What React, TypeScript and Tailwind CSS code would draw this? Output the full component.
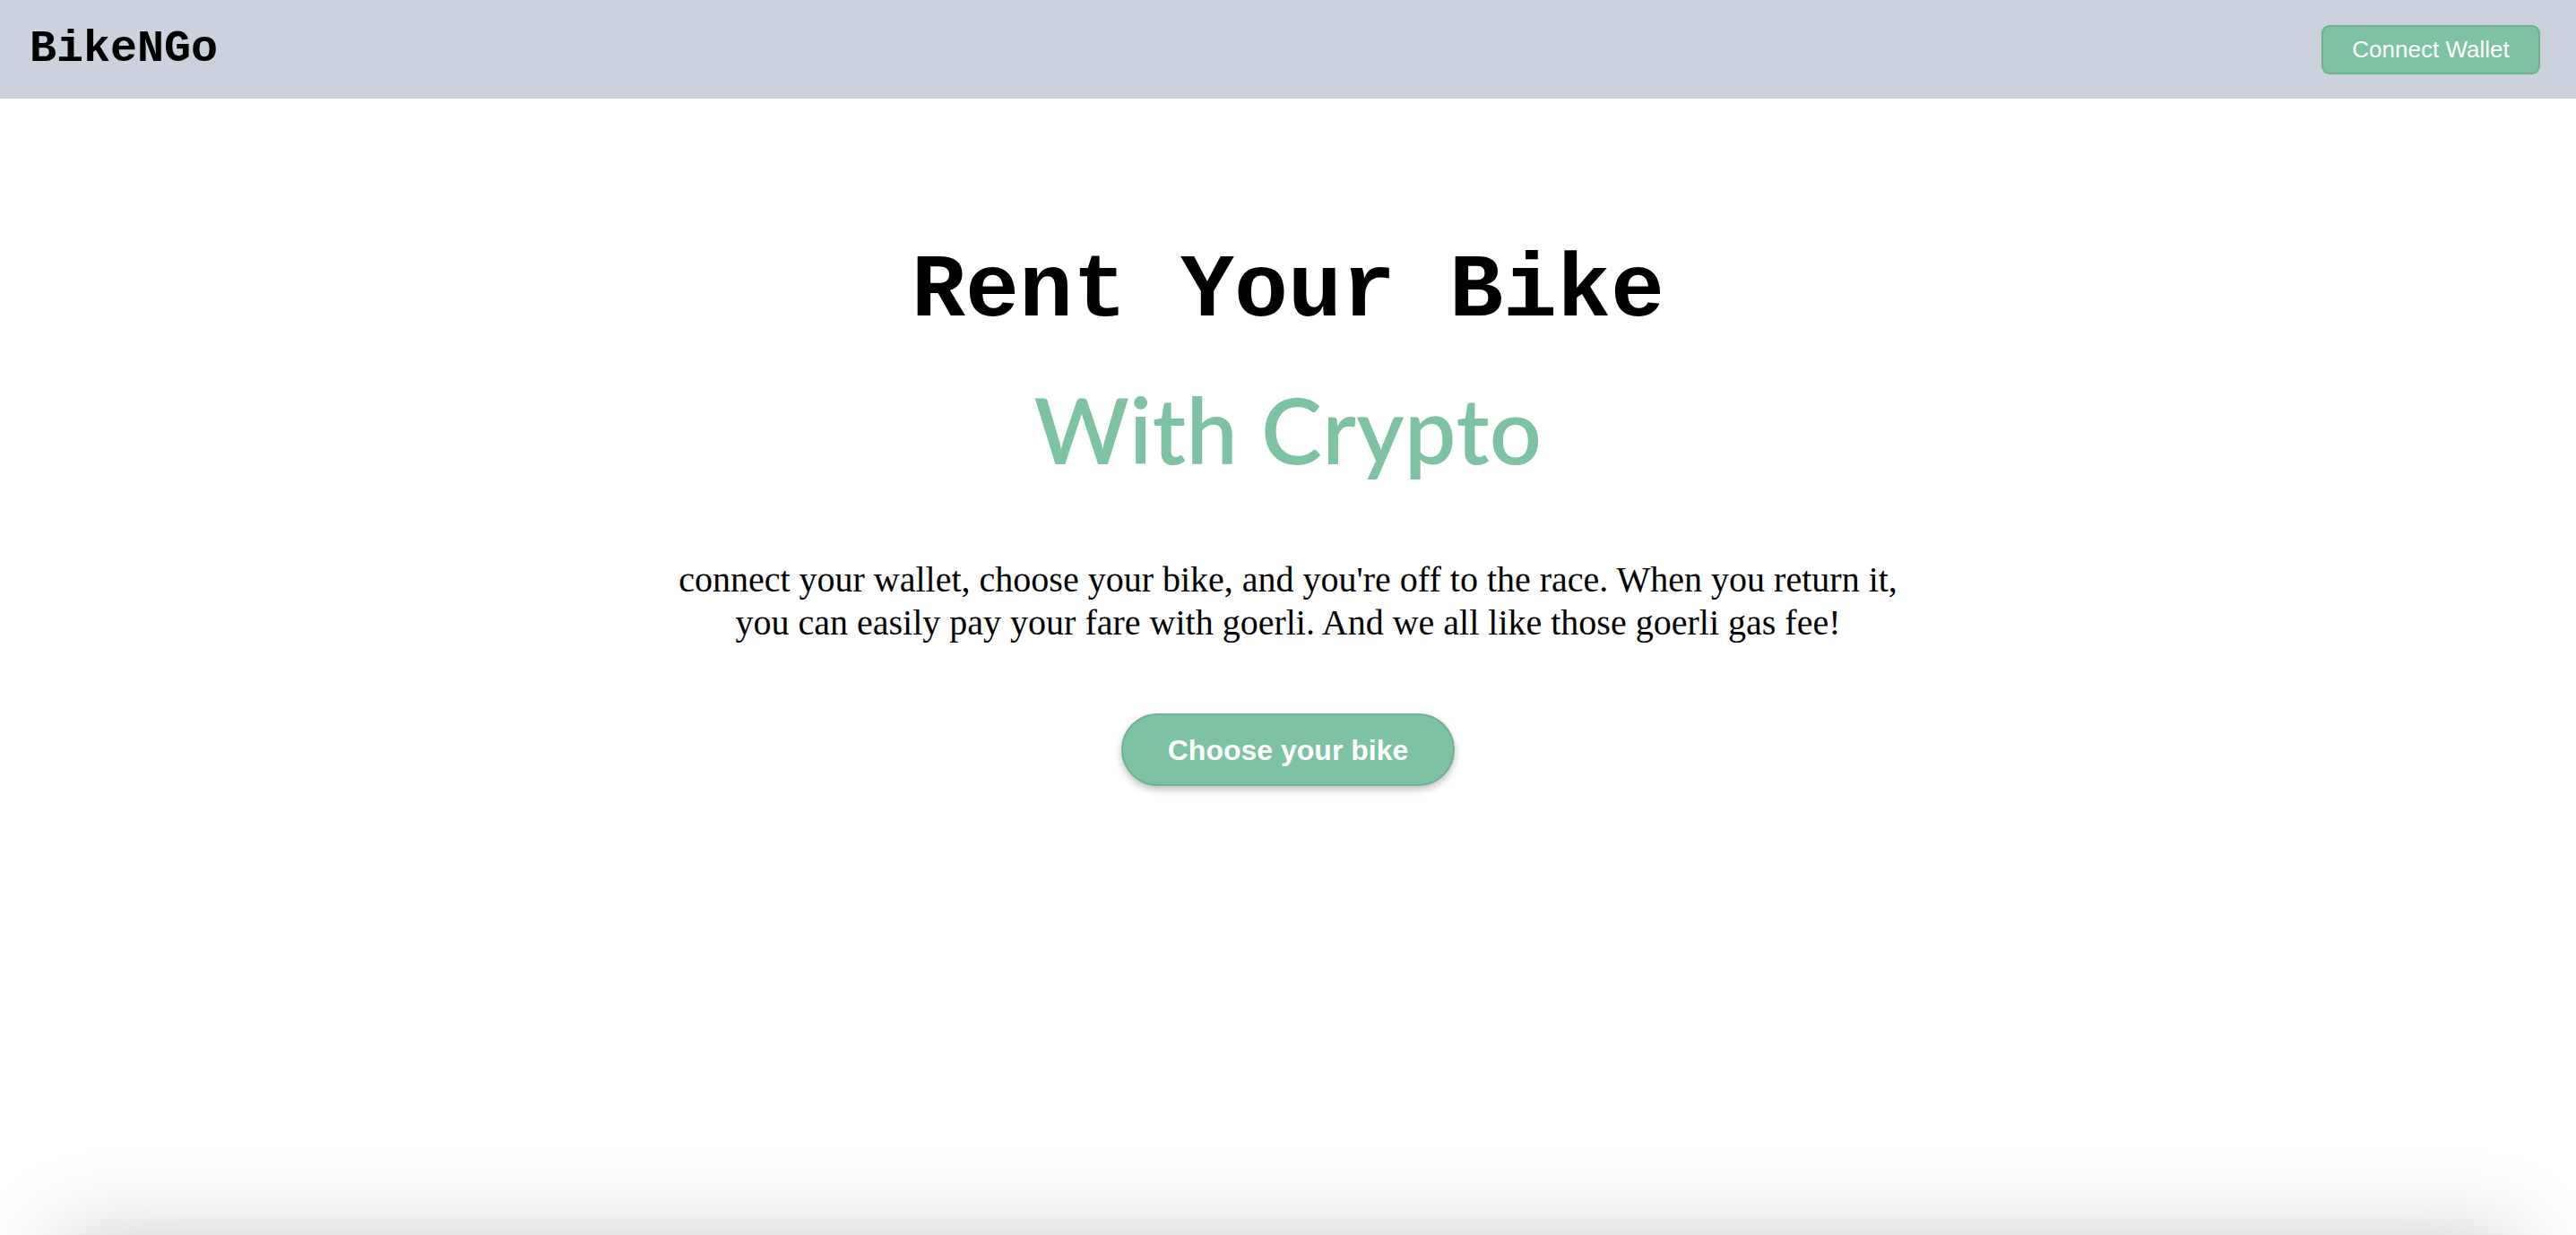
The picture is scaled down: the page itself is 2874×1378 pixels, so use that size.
const GREEN = "bg-[#7dc2a3]";

const Navbar = () => {
  return (
    <nav className="h-[110px] bg-[#cbd2dd] flex items-center justify-between pl-[33px] pr-[40px]">
      <div className="font-['Liberation_Mono',monospace] font-bold text-[50px] text-black leading-none">
        BikeNGo
      </div>
      <button
        className={`${GREEN} h-[55px] w-[244px] rounded-[9px] border-2 border-[#6fb192] text-white text-[26px] font-['Liberation_Sans',Arial,sans-serif]`}
      >
        Connect Wallet
      </button>
    </nav>
  );
};

const Hero = () => {
  return (
    <main className="flex flex-col items-center min-h-[1268px]">
      <h1 className="mt-[166px] font-['Liberation_Mono',monospace] font-bold text-[100px] leading-[100px] text-black">
        Rent Your Bike
      </h1>
      <h2 className="mt-[51px] font-['Lato',sans-serif] font-semibold text-[102px] leading-[104px] text-[#7dc2a3] tracking-[0.5px]">
        With Crypto
      </h2>
      <p className="mt-[92px] max-w-[1400px] text-center font-['Liberation_Serif','Times_New_Roman',serif] text-[40px] leading-[48px] text-black">
        connect your wallet, choose your bike, and you're off to the race. When you return it, you can easily pay
        your fare with goerli. And we all like those goerli gas fee!
      </p>
      <button
        className={`${GREEN} mt-[77px] h-[81px] w-[372px] rounded-full border-2 border-[#6fb192] text-white font-bold text-[32px] font-['Liberation_Sans',Arial,sans-serif] shadow-[0_4px_8px_rgba(0,0,0,0.25)]`}
      >
        Choose your bike
      </button>
    </main>
  );
};

const App = () => {
  return (
    <div className="bg-white min-h-screen">
      <Navbar />
      <Hero />
      <section className="mx-[60px] h-[600px] bg-white rounded-[24px] shadow-[0_0_100px_rgba(0,0,0,0.2)]" />
    </div>
  );
};

export default App;
